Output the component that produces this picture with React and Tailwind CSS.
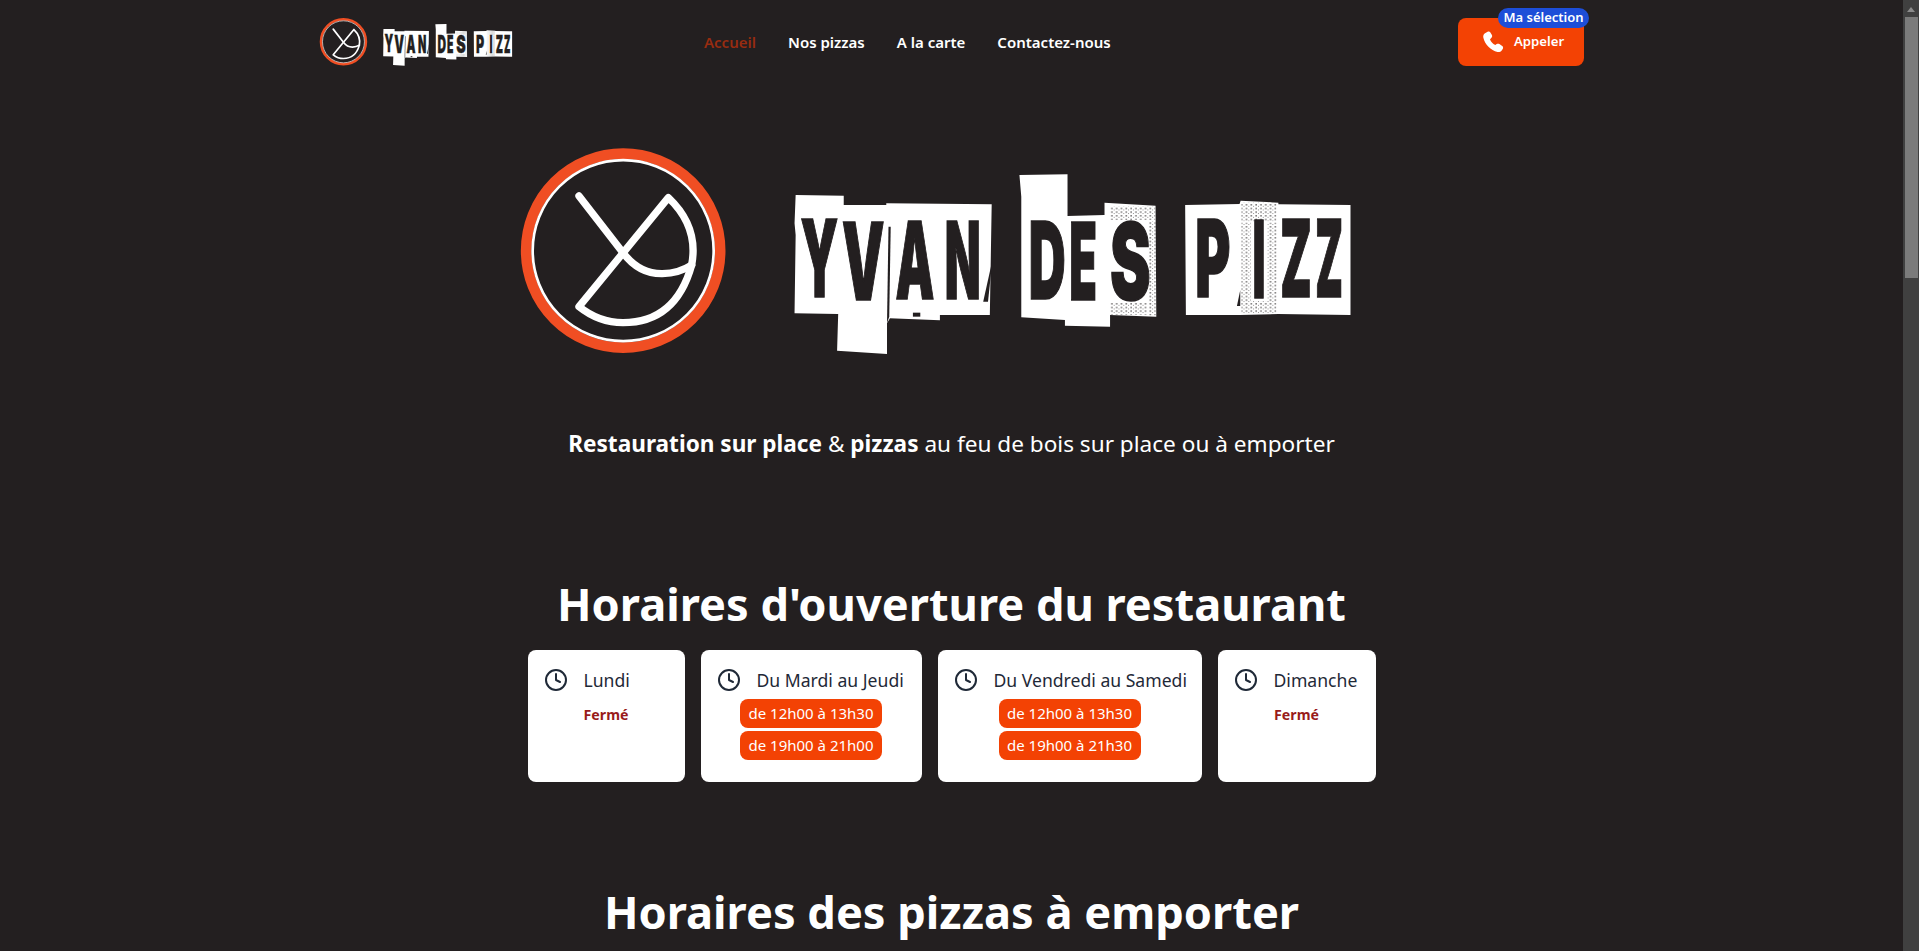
import React from "react";
import { Clock } from "lucide-react";

const DARK = "#231f20";

function Letter({ x, w, y, t }) {
  return (
    <text
      x={x}
      y={y}
      textLength={w}
      lengthAdjust="spacingAndGlyphs"
      fontFamily="Inter, 'Liberation Sans', sans-serif"
      fontWeight="900"
      fontSize="320"
      fill={DARK}
      stroke={DARK}
      strokeWidth="5"
    >
      {t}
    </text>
  );
}

function Logo({ className, id }) {
  return (
    <svg viewBox="521 148 832 207" className={className} role="img" aria-label="Yvan des Pizz">
      <defs>
        <pattern id={id} width="13" height="11" patternUnits="userSpaceOnUse">
          <rect x="1" y="1" width="4" height="3" fill={DARK} />
          <rect x="8" y="6" width="2" height="2" fill={DARK} />
        </pattern>
      </defs>
      <g transform="translate(500 130) scale(0.33333)">
        <circle cx="372.5" cy="362" r="291" fill="none" stroke="#f04e23" strokeWidth="32" />
        <circle cx="372.5" cy="362" r="271.5" fill="none" stroke="#fff" strokeWidth="8" />
        <g fill="none" stroke="#fff" strokeWidth="22" strokeLinecap="round" strokeLinejoin="round">
          <path d="M240 198 L372 368 Q 420 432 490 431 Q 540 430 578 405" />
          <path d="M508 203 L240 530 Q 300 578 372 578 Q 530 578 578 405 Q 600 290 508 203 Z" />
        </g>
      </g>
      <g transform="translate(780 160) scale(0.36990 0.33333)">
        <polygon fill="#fff" points="45,105 175,107 175,135 290,135 290,130 575,133 570,465 435,465 435,481 300,475 292,490 292,582 157,572 160,462 42,460 45,225 42,190" />
        <polygon fill="#fff" points="650,45 780,43 780,168 880,165 880,128 1018,137 1020,470 895,465 895,500 773,497 773,480 655,472 655,110" />
        <polygon fill="#fff" points="1098,135 1245,132 1248,122 1350,128 1350,133 1545,135 1545,465 1350,462 1245,465 1100,465" />
        <rect x="895" y="140" width="122" height="40" fill={`url(#${id})`} />
        <rect x="1000" y="183" width="18" height="283" fill={`url(#${id})`} />
        <rect x="895" y="428" width="100" height="36" fill={`url(#${id})`} />
        <rect x="1250" y="128" width="95" height="56" fill={`url(#${id})`} />
        <rect x="1250" y="188" width="26" height="235" fill={`url(#${id})`} />
        <rect x="1320" y="188" width="26" height="235" fill={`url(#${id})`} />
        <rect x="1250" y="423" width="95" height="38" fill={`url(#${id})`} />
        <rect x="362" y="458" width="20" height="12" fill={DARK} />
        <polygon fill={DARK} points="296,200 302,200 298,470 292,490" />
        <polygon fill={DARK} points="577,300 565,425 552,425" />
        <polygon fill={DARK} points="1247,390 1247,438 1238,438" />
        <Letter x={58} w={102} y={410} t="Y" />
        <Letter x={170} w={115} y={420} t="V" />
        <Letter x={315} w={105} y={418} t="A" />
        <Letter x={448} w={97} y={418} t="N" />
        <Letter x={675} w={100} y={416} t="D" />
        <Letter x={785} w={75} y={420} t="E" />
        <Letter x={895} w={110} y={420} t="S" />
        <Letter x={1125} w={95} y={412} t="P" />
        <Letter x={1280} w={35} y={415} t="I" />
        <Letter x={1355} w={85} y={412} t="Z" />
        <Letter x={1450} w={75} y={412} t="Z" />
      </g>
    </svg>
  );
}

function Phone() {
  return (
    <svg viewBox="0 0 24 24" className="w-[24px] h-[24px] shrink-0" fill="#fff">
      <path d="M6.600 1.800c1-.6 2.200-.3 2.800.7l1.500 2.600c.5.900.3 2-.4 2.700L9 9.200c.7 2.300 2.700 4.600 5.300 5.900l1.400-1c.8-.6 1.900-.6 2.700 0l2.800 1.900c1 .7 1.200 2 .5 3l-1 1.500c-1 1.300-2.600 1.900-4.200 1.500C9.900 20.700 3.700 14.500 2.300 7.600 2 5.900 2.600 4.200 4 3.300z" />
    </svg>
  );
}

function Card({ day, hours, width }) {
  return (
    <div className={`bg-white rounded-lg h-[132px] px-4 pt-[16px] flex flex-col items-center shrink-0 ${width}`}>
      <div className="self-stretch flex items-center gap-4 h-[28px] text-[17.6px] text-[#1f2937]">
        <Clock size={24} strokeWidth={2} className="shrink-0" />
        <span className="whitespace-nowrap">{day}</span>
      </div>
      {hours ? (
        <div className="flex flex-col gap-[3px] mt-[5px]">
          {hours.map((h) => (
            <span key={h} className="bg-[#f34204] text-white rounded-lg h-[29px] w-[142px] flex items-center justify-center text-[15px] whitespace-nowrap">
              {h}
            </span>
          ))}
        </div>
      ) : (
        <span className="text-[#991b1b] font-bold text-[14.2px] mt-[10px]">Fermé</span>
      )}
    </div>
  );
}

export default function App() {
  return (
    <div className="flex h-[951px] overflow-hidden bg-[#231f20] text-white font-['Noto_Sans','Open_Sans',sans-serif]">
      <div className="flex-1 min-w-0 overflow-hidden">
        <header className="w-[1280px] mx-auto px-[6.5px] h-[84px] flex items-center">
          <Logo id="dots-a" className="w-[196px] h-[48px] shrink-0" />
          <nav className="flex gap-8 ml-[190px] pt-[1px] text-[15px] font-semibold">
            <a className="text-[#982c10]">Accueil</a>
            <a>Nos pizzas</a>
            <a>A la carte</a>
            <a>Contactez-nous</a>
          </nav>
          <div className="relative ml-auto mr-[1px]">
            <button className="w-[126px] h-[48px] rounded-lg bg-[#f34204] flex items-center pl-[23px] gap-[9px] text-[13.2px] font-semibold">
              <Phone />
              Appeler
            </button>
            <span className="absolute -top-[10px] -right-[5px] w-[91px] h-[20px] rounded-full bg-[#1d4ed8] text-[13px] font-semibold flex items-center justify-center">
              Ma sélection
            </span>
          </div>
        </header>

        <div className="flex justify-center mt-[64px] ml-[-32px]">
          <Logo id="dots-b" className="w-[832px] h-[207px]" />
        </div>

        <p className="mt-[73px] text-center text-[22.6px] leading-[32px]">
          <b>Restauration sur place</b> &amp; <b>pizzas</b> au feu de bois sur place ou à emporter
        </p>

        <h2 className="mt-[114px] text-center text-[45.2px] font-bold leading-[60px]">Horaires d'ouverture du restaurant</h2>

        <div className="flex justify-center gap-4 mt-[16px]">
          <Card width="w-[157px]" day="Lundi" />
          <Card width="w-[221px]" day="Du Mardi au Jeudi" hours={["de 12h00 à 13h30", "de 19h00 à 21h00"]} />
          <Card width="w-[264px]" day="Du Vendredi au Samedi" hours={["de 12h00 à 13h30", "de 19h00 à 21h30"]} />
          <Card width="w-[158px]" day="Dimanche" />
        </div>

        <h2 className="mt-[100px] text-center text-[45.2px] font-bold leading-[60px]">Horaires des pizzas à emporter</h2>
      </div>

      <div className="w-4 shrink-0 bg-[#404040] flex flex-col items-center">
        <svg viewBox="0 0 10 6" className="w-[8px] h-[5px] mt-[7px] fill-[#8c8c8c]"><path d="M5 0 10 6H0z" /></svg>
        <div className="w-[13px] ml-[1px] h-[261px] mt-[5px] bg-[#7b7b7b]" />
      </div>
    </div>
  );
}
